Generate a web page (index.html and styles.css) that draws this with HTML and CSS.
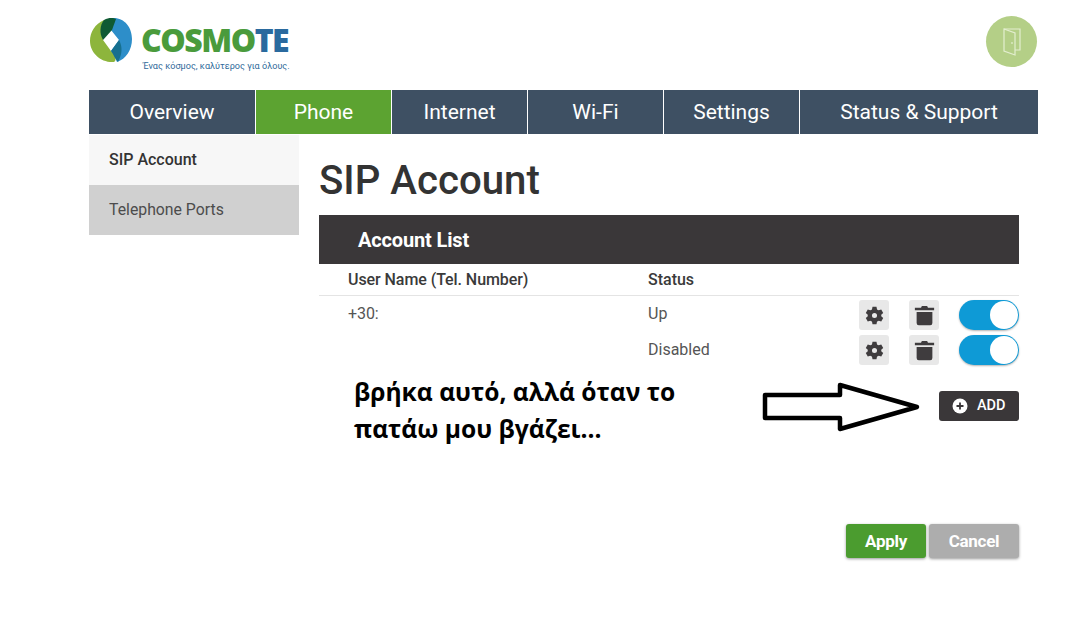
FILE: index.html
```html
<!DOCTYPE html>
<html lang="en">
<head>
	<meta charset="UTF-8">
	<title>SIP Account</title>
	<link rel="stylesheet" href="styles.css">
</head>
<body>
	<div class="page">
		<div class="top">
			<div class="logo">
				<svg class="logo-mark" width="42" height="46" viewBox="0 0 42 46">
					<path d="M14 3C5 7 0 15 0 24C0 36 11 46 24 45C26 44 26 41 25 38L21 34L13 23Z" fill="#8db53c"/>
					<path d="M22 1C34 0 42 10 42 22C42 33 36 42 27 45C25 40 25 38 21 34L29 23L21 13C20 9 20 5 22 1Z" fill="#2d8ec9"/>
					<path d="M14 3C19 0 24 1 26 2L22 13L13 23C9 16 10 8 14 3Z" fill="#0f5a33"/>
					<path d="M21 34L29 23C33 30 32 38 28 45C25 42 24 38 21 34Z" fill="#16708f"/>
				</svg>
				<div class="logo-words">
					<div class="logo-name">COSMO<span class="logo-te">TE</span></div>
					<div class="logo-tag">Ένας κόσμος, καλύτερος για όλους.</div>
				</div>
			</div>
			<div class="logout">
				<svg width="20" height="30" viewBox="0 0 20 30" fill="none" stroke="#e3eecf" stroke-width="1.2">
					<path d="M2 2H18V23H13"/>
					<path d="M2 2L13 6V28L2 24Z"/>
					<path d="M10 15V17"/>
				</svg>
			</div>
		</div>

		<div class="nav">
			<a class="tab tab-first">Overview</a>
			<a class="tab on">Phone</a>
			<a class="tab">Internet</a>
			<a class="tab">Wi-Fi</a>
			<a class="tab">Settings</a>
			<a class="tab tab-last">Status &amp; Support</a>
		</div>

		<div class="body-wrap">
			<div class="side">
				<div class="side-item side-on">SIP Account</div>
				<div class="side-item">Telephone Ports</div>
			</div>
			<div class="main">
				<h1>SIP Account</h1>
				<div class="list-head">Account List</div>
				<div class="row row-head">
					<div class="col-user">User Name (Tel. Number)</div>
					<div class="col-status">Status</div>
				</div>
				<div class="row row-one">
					<div class="col-user">+30:</div>
					<div class="col-status">Up</div>
					<div class="btn-box"><svg class="ico-gear" viewBox="0 0 24 24"><use href="#gear"/></svg></div>
					<div class="btn-box"><svg class="ico-bin" viewBox="0 0 24 24"><use href="#bin"/></svg></div>
					<div class="toggle"><span class="knob"></span></div>
				</div>
				<div class="row row-two">
					<div class="col-user"></div>
					<div class="col-status">Disabled</div>
					<div class="btn-box"><svg class="ico-gear" viewBox="0 0 24 24"><use href="#gear"/></svg></div>
					<div class="btn-box"><svg class="ico-bin" viewBox="0 0 24 24"><use href="#bin"/></svg></div>
					<div class="toggle"><span class="knob"></span></div>
				</div>
				<div class="add-line">
					<div class="note">βρήκα αυτό, αλλά όταν το<br>πατάω μου βγάζει...</div>
					<svg class="arrow" width="160" height="54" viewBox="0 0 160 54" fill="#fff" stroke="#000" stroke-width="4.5" stroke-linejoin="round">
						<path d="M3 13H78V3L155 25L78 47V36H3Z"/>
					</svg>
					<div class="add">
						<svg width="16" height="16" viewBox="0 0 16 16">
							<circle cx="8" cy="8" r="7.5" fill="#fff"/>
							<path d="M8 4.5V11.5M4.5 8H11.5" stroke="#3a3739" stroke-width="1.8"/>
						</svg>
						<span class="add-txt">ADD</span>
					</div>
				</div>
				<div class="actions">
					<div class="act act-apply">Apply</div>
					<div class="act act-cancel">Cancel</div>
				</div>
			</div>
		</div>
	</div>

	<svg class="defs" width="0" height="0">
		<symbol id="gear" viewBox="0 0 24 24">
			<path fill-rule="evenodd" fill="#3f3c3e" d="M9.500 1H14.500L15.200 4.300A8 8 0 0 1 17.300 5.500L20.500 4.500L23 8.800L20.500 11A8 8 0 0 1 20.500 13L23 15.200L20.500 19.500L17.300 18.500A8 8 0 0 1 15.200 19.700L14.500 23H9.500L8.800 19.700A8 8 0 0 1 6.700 18.500L3.500 19.500L1 15.200L3.500 13A8 8 0 0 1 3.500 11L1 8.800L3.500 4.500L6.700 5.500A8 8 0 0 1 8.800 4.300ZM12 8.800A3.200 3.200 0 1 0 12 15.200A3.200 3.200 0 1 0 12 8.800Z"/>
		</symbol>
		<symbol id="bin" viewBox="0 0 24 24">
			<path fill="#3f3c3e" d="M9 1H15L16 3H23V6H1V3H8ZM3 8H21V20.500A2.500 2.500 0 0 1 18.500 23H5.500A2.500 2.500 0 0 1 3 20.500Z"/>
		</symbol>
	</svg>
</body>
</html>
```

FILE: styles.css
```css
*{
	box-sizing: border-box;
}
body{
	margin: 0;
	background: #fff;
	color: #333;
	font-family: Roboto, "Liberation Sans", sans-serif;
}
.page{
	width: 1091px;
	height: 628px;
	padding-left: 89px;
	overflow: hidden;
}
.defs{
	display: block;
	height: 0;
}

/* header */
.top{
	width: 949px;
	height: 90px;
	display: flex;
	justify-content: space-between;
	padding-top: 16px;
}
.logo{
	display: flex;
	gap: 9px;
}
.logo-mark{
	margin: 1px 0 0 1px;
}
.logo-name{
	font-family: "Open Sans", sans-serif;
	font-weight: 800;
	font-size: 32px;
	line-height: 44px;
	letter-spacing: -1.5px;
	color: #4a9b3c;
	margin-top: 2px;
}
.logo-te{
	color: #2a6a9e;
}
.logo-tag{
	font-size: 9.1px;
	line-height: 12px;
	color: #2f6a9a;
	margin: -2px 0 0 2px;
	white-space: nowrap;
}
.logout{
	width: 51px;
	height: 51px;
	margin-right: 1px;
	border-radius: 50%;
	background: #b4cf87;
	display: flex;
	align-items: center;
	justify-content: center;
}

/* tabs */
.nav{
	width: 949px;
	height: 44px;
	display: flex;
	background: #3e5063;
}
.tab{
	width: 136px;
	border-right: 1px solid #fff;
	color: #fff;
	font-size: 21px;
	line-height: 44px;
	text-align: center;
}
.tab-first{
	width: 167px;
}
.tab-last{
	flex: 1;
	border-right: 0;
}
.on{
	background: #5ca331;
}

/* side menu */
.body-wrap{
	display: flex;
	gap: 20px;
	padding-top: 1px;
}
.side{
	width: 210px;
}
.side-item{
	height: 50px;
	line-height: 49px;
	padding-left: 20px;
	font-size: 15.8px;
	background: #d0d0d0;
	color: #4c4c4c;
}
.side-on{
	background: #f7f7f7;
	color: #333;
	font-weight: 500;
	font-size: 16px;
}

/* main part */
.main{
	width: 700px;
}
h1{
	margin: 0;
	height: 80px;
	padding-top: 22px;
	font-size: 40.2px;
	line-height: 48px;
	font-weight: 500;
	color: #333;
}
.list-head{
	height: 49px;
	line-height: 50px;
	padding-left: 39px;
	background: #3a3739;
	color: #fff;
	font-size: 20px;
	font-weight: 700;
	letter-spacing: -.15px;
}
.row{
	display: flex;
	align-items: center;
	padding-left: 29px;
	font-size: 16px;
}
.row-head{
	height: 32px;
	border-bottom: 1px solid #e4e4e4;
	font-weight: 500;
	color: #3a3a3a;
}
.row-one{
	height: 36px;
	padding-top: 2px;
}
.row-two{
	height: 36px;
}
.row-one, .row-two{
	color: #555;
}
.row-one .col-user, .row-one .col-status{
	margin-bottom: 3px;
}
.row-two .col-status{
	margin-bottom: 1px;
}
.col-user{
	width: 300px;
	letter-spacing: -.07px;
}
.col-status{
	width: 211px;
}
.btn-box{
	width: 30px;
	height: 30px;
	margin-right: 20px;
	background: #e8e8e8;
	border-radius: 3px;
	display: flex;
	align-items: center;
	justify-content: center;
}
.ico-gear{
	width: 19px;
	height: 19px;
}
.ico-bin{
	width: 21px;
	height: 21px;
}
.toggle{
	width: 60px;
	height: 30px;
	border-radius: 15px;
	background: #0e9ad6;
	box-shadow: 0 1px 2px rgba(0,0,0,.3);
	display: flex;
	justify-content: flex-end;
	align-items: center;
	padding-right: 1px;
}
.knob{
	width: 28px;
	height: 28px;
	border-radius: 50%;
	background: #fff;
}
.add-line{
	height: 107px;
	display: flex;
	align-items: flex-start;
	padding-top: 5px;
}
.note{
	width: 409px;
	margin-left: 35px;
	flex: none;
	font-family: "Open Sans", sans-serif;
	font-weight: 700;
	font-size: 24.6px;
	line-height: 37px;
	color: #000;
}
.arrow{
	flex: none;
	margin-top: 9px;
	margin-left: -1px;
}
.add{
	width: 80px;
	height: 30px;
	margin: 18px 0 0 17px;
	background: #3a3739;
	border-radius: 3px;
	color: #fff;
	font-size: 14.5px;
	font-weight: 500;
	display: flex;
	align-items: center;
	gap: 9px;
	padding-left: 13px;
}
.add-txt{
	margin-bottom: 2px;
}
.actions{
	display: flex;
	justify-content: flex-end;
	gap: 3px;
	margin-top: 49px;
}
.act{
	width: 90px;
	height: 34px;
	line-height: 34px;
	border-radius: 3px;
	text-align: center;
	color: #fff;
	font-size: 17px;
	font-weight: 700;
	letter-spacing: -.3px;
	box-shadow: 0 1px 3px rgba(0,0,0,.4);
}
.act-apply{
	width: 80px;
	background: #4b9c2f;
}
.act-cancel{
	background: #adadad;
}
```
